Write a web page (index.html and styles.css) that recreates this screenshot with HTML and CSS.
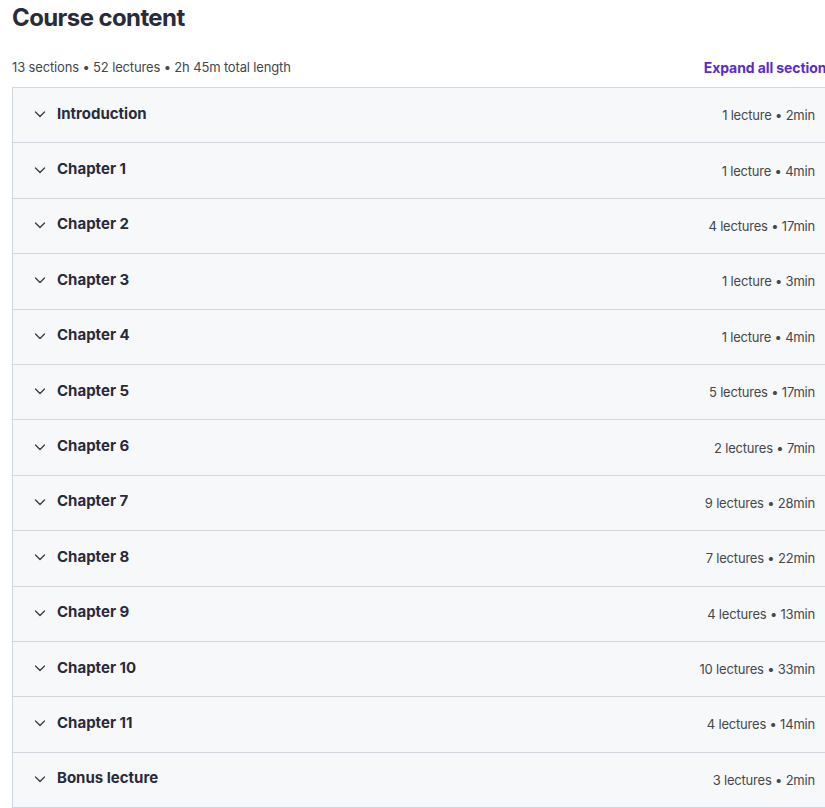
FILE: index.html
```html
<!DOCTYPE html>
<html lang="en">
<head>
    <meta charset="UTF-8">
    <title>Course content</title>
    <link rel="stylesheet" href="styles.css">
</head>
<body>
    <div class="course">
        <h2 class="title">Course content</h2>
        <div class="summary">
            <span class="stats">13 sections &bull; 52 lectures &bull; 2h 45m total length</span>
            <button class="expand">Expand all sections</button>
        </div>
        <div class="panel" id="panel"></div>
    </div>

    <script>
        const sections = [
            ['Introduction', '1 lecture', '2min'],
            ['Chapter 1', '1 lecture', '4min'],
            ['Chapter 2', '4 lectures', '17min'],
            ['Chapter 3', '1 lecture', '3min'],
            ['Chapter 4', '1 lecture', '4min'],
            ['Chapter 5', '5 lectures', '17min'],
            ['Chapter 6', '2 lectures', '7min'],
            ['Chapter 7', '9 lectures', '28min'],
            ['Chapter 8', '7 lectures', '22min'],
            ['Chapter 9', '4 lectures', '13min'],
            ['Chapter 10', '10 lectures', '33min'],
            ['Chapter 11', '4 lectures', '14min'],
            ['Bonus lecture', '3 lectures', '2min']
        ];

        const chevron = '<svg class="chevron" viewBox="0 0 12 12" width="12" height="12"><path d="M1.5 4l4.5 4.5 4.5-4.5" fill="none" stroke="currentColor" stroke-width="1.3" stroke-linecap="round" stroke-linejoin="round"/></svg>';

        const panel = document.getElementById('panel');
        sections.forEach(function (s) {
            const row = document.createElement('div');
            row.className = 'section';
            row.innerHTML = chevron +
                '<span class="name">' + s[0] + '</span>' +
                '<span class="meta">' + s[1] + ' &bull; ' + s[2] + '</span>';
            panel.appendChild(row);
        });
    </script>
</body>
</html>
```

FILE: styles.css
```css
body {
    margin: 0;
    font-family: Inter, "Noto Sans", sans-serif;
    color: #2d2f31;
    background: #fff;
    overflow: hidden;
}

.course {
    width: 828px;
    padding-left: 12px;
}

.title {
    font-size: 24px;
    font-weight: 700;
    margin: 0;
    padding-top: 3px;
    line-height: 30px;
    letter-spacing: -0.6px;
    color: #2a2b3a;
}

.summary {
    display: flex;
    justify-content: space-between;
    align-items: center;
    margin-top: 21px;
    height: 26px;
    margin-bottom: 7px;
}

.stats {
    font-size: 13px;
    letter-spacing: -0.15px;
    color: #45484b;
}

.expand {
    background: none;
    border: none;
    padding: 0;
    margin-right: 6px;
    font-family: inherit;
    font-size: 14px;
    font-weight: 700;
    letter-spacing: -0.1px;
    color: #5b2cc9;
    cursor: pointer;
    white-space: nowrap;
}

.panel {
    border: 1px solid #d1d7dc;
    border-bottom: none;
}

.section {
    display: flex;
    align-items: center;
    height: 54.4px;
    padding: 0 24px 0 21px;
    background: #f7f8fa;
    border-bottom: 1px solid #d1d7dc;
}

.chevron {
    color: #3b3d40;
    margin-right: 11px;
    margin-top: -2px;
}

.name {
    font-size: 15px;
    font-weight: 700;
    flex: 1;
    color: #2a2b3a;
    padding-bottom: 4px;
}

.meta {
    font-size: 13px;
    letter-spacing: -0.2px;
    color: #45484b;
}
```
